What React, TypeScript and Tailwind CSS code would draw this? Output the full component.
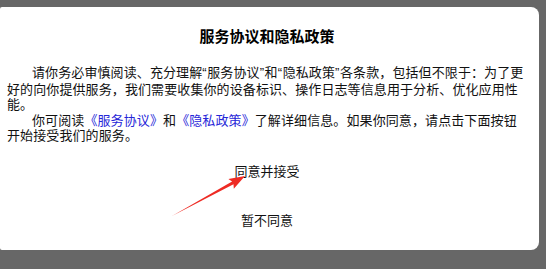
import React from "react";

const Q = ({ c }: { c: string }) => (
  <span className="tracking-[0.6px] [font-family:'Liberation_Sans',sans-serif]">{c}</span>
);

export default function App() {
  return (
    <div className="relative w-[546px] h-[269px] bg-[#676767] pt-[7px] overflow-hidden [font-family:'Noto_Sans_CJK_SC','Noto_Sans',sans-serif] text-[#111]">
      <div className="w-[539px] h-[243px] bg-white rounded-r-[8px] rounded-l-[2px] pl-[7px] pr-[12px] pt-[19px] flex flex-col">
        <h1 className="text-center text-[15px] leading-[20px] font-bold text-black">服务协议和隐私政策</h1>
        <div className="mt-[18px] text-[13px] tracking-[0.1px] leading-[15.5px]">
          <p className="indent-[25px]">
            请你务必审慎阅读、充分理解<Q c="“" />服务协议<Q c="”" />和<Q c="“" />隐私政策<Q c="”" />各条款，包括但不限于：为了更好的向你提供服务，我们需要收集你的设备标识、操作日志等信息用于分析、优化应用性能。
          </p>
          <p className="indent-[25px]">
            你可阅读<span className="text-[#2626d8]">《服务协议》</span>和<span className="text-[#2626d8]">《隐私政策》</span>了解详细信息。如果你同意，请点击下面按钮开始接受我们的服务。
          </p>
        </div>
        <button className="mt-[18px] self-center text-[13px] leading-[20px] text-[#111]">同意并接受</button>
        <button className="mt-[29px] self-center text-[13px] leading-[20px] text-[#111]">暂不同意</button>
      </div>
      <svg className="absolute left-0 top-0" width="546" height="269" viewBox="0 0 546 269">
        <polygon
          points="172,216 233.5,184.2 233.8,188.7 245,176 228.4,179.1 232.1,181.6"
          fill="#ee2b24"
        />
      </svg>
    </div>
  );
}
